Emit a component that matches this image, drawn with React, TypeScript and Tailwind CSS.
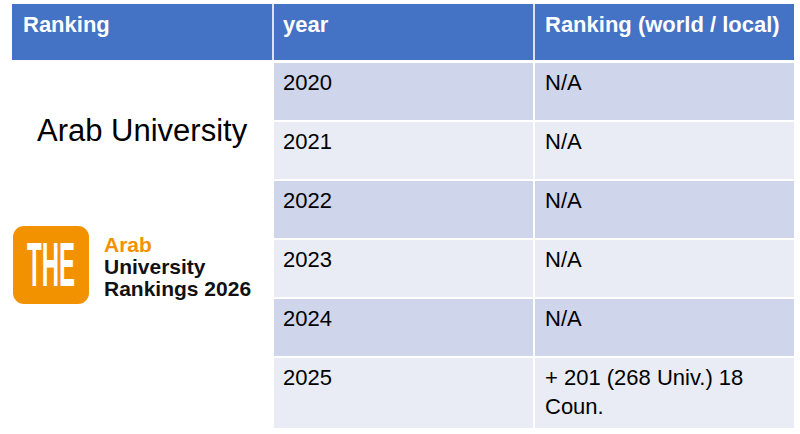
const rows = [
  { year: '2020', rank: 'N/A' },
  { year: '2021', rank: 'N/A' },
  { year: '2022', rank: 'N/A' },
  { year: '2023', rank: 'N/A' },
  { year: '2024', rank: 'N/A' },
  { year: '2025', rank: '+ 201 (268 Univ.) 18 Coun.' },
];

function TheLogo() {
  return (
    <div className="flex items-start">
      <svg width="76" height="78" viewBox="0 0 76 78" className="shrink-0">
        <rect x="0" y="0" width="76" height="78" rx="11" fill="#F39200" />
        <text
          x="14"
          y="60"
          fill="#fff"
          fontSize="63"
          fontWeight="700"
          fontFamily="'Liberation Sans', Arial, sans-serif"
          textLength="48"
          lengthAdjust="spacingAndGlyphs"
        >
          THE
        </text>
      </svg>
      <div className="ml-[15px] mt-[8px] text-[21px] leading-[22px] font-bold">
        <div className="text-[#F39200]">Arab</div>
        <div className="text-[#111]">University</div>
        <div className="text-[#111]">Rankings 2026</div>
      </div>
    </div>
  );
}

export default function App() {
  return (
    <div className="w-[800px] h-[434px] bg-white pl-[12px] pt-[4px] font-['Liberation_Sans',Arial,sans-serif] overflow-hidden">
      {/* header */}
      <div className="grid grid-cols-[260px_259px_259px] gap-x-[2px] w-[782px] h-[56px] bg-[#D9E1F2]">
        <div className="bg-[#4472C4] text-white font-bold text-[22px] leading-[26px] pt-[8px] pl-[11px]">
          Ranking
        </div>
        <div className="bg-[#4472C4] text-white font-bold text-[22px] leading-[26px] pt-[8px] pl-[9px]">
          year
        </div>
        <div className="bg-[#4472C4] text-white font-bold text-[22px] leading-[26px] pt-[8px] pl-[10px]">
          Ranking (world / local)
        </div>
      </div>

      {/* body */}
      <div className="mt-[3px] grid grid-cols-[260px_259px_259px] grid-rows-[57px_57px_57px_57px_57px_70px] gap-x-[2px] gap-y-[2px] w-[782px]">
        <div className="row-span-6 bg-white">
          <div className="pt-[49px] pl-[25px] text-[31px] leading-[37px] text-black">
            Arab University
          </div>
          <div className="mt-[77px] pl-[1px]">
            <TheLogo />
          </div>
        </div>
        {rows.map((r, i) => {
          const bg = i % 2 === 0 ? 'bg-[#CFD5EA]' : 'bg-[#E9EBF5]';
          return [
            <div key={r.year + 'y'} className={`${bg} text-[22px] leading-[29px] pt-[5px] pl-[9px] text-black`}>
              {r.year}
            </div>,
            <div key={r.year + 'r'} className={`${bg} text-[22px] leading-[29px] pt-[5px] pl-[10px] pr-[10px] text-black`}>
              {r.rank}
            </div>,
          ];
        })}
      </div>
    </div>
  );
}
